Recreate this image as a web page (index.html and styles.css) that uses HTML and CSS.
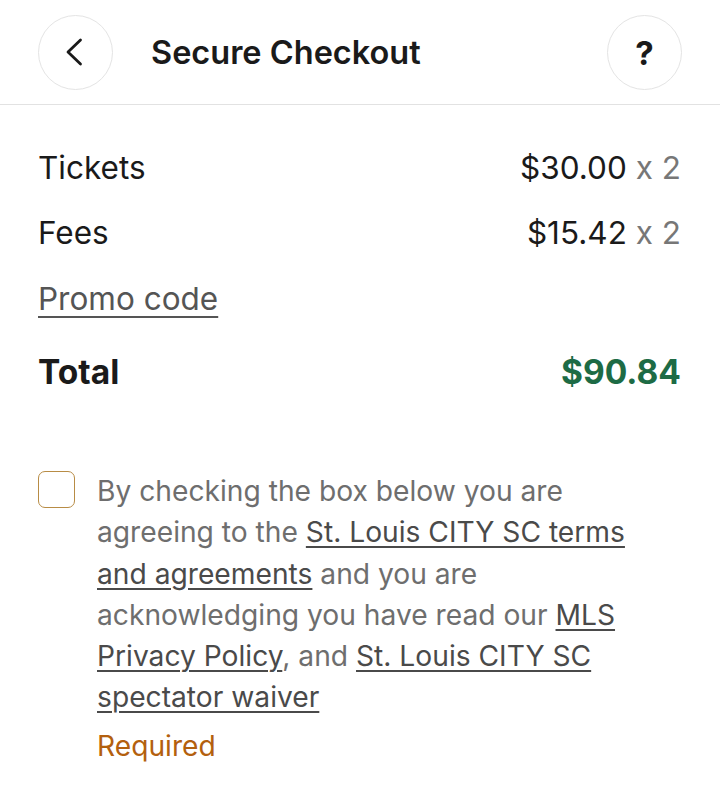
FILE: index.html
```html
<!DOCTYPE html>
<html>
<head>
<meta charset="utf-8">
<link rel="stylesheet" href="styles.css">
</head>
<body>
<header class="topbar">
  <button class="circle-btn" aria-label="Back">
    <svg class="chev" width="18" height="28" viewBox="0 0 18 28"><path d="M15.5 2 L3 14 L15.5 26" fill="none" stroke="#1a1a1a" stroke-width="2.8" stroke-linecap="round" stroke-linejoin="round"/></svg>
  </button>
  <h1 class="title">Secure Checkout</h1>
  <button class="circle-btn help" aria-label="Help">?</button>
</header>
<main class="content">
  <div class="row">
    <span class="label">Tickets</span>
    <span class="value">$30.00 <span class="qty">x 2</span></span>
  </div>
  <div class="row">
    <span class="label">Fees</span>
    <span class="value">$15.42 <span class="qty">x 2</span></span>
  </div>
  <div class="row promo-row">
    <a class="promo" href="#">Promo code</a>
  </div>
  <div class="row total-row">
    <span class="total-label">Total</span>
    <span class="total-value">$90.84</span>
  </div>
  <div class="agree">
    <span class="checkbox"></span>
    <div class="agree-text">
      <p>By checking the box below you are agreeing to the <a href="#">St. Louis CITY SC terms and agreements</a> and you are acknowledging you have read our <a href="#">MLS Privacy Policy</a>, and <a href="#">St. Louis CITY SC spectator waiver</a></p>
      <div class="required">Required</div>
    </div>
  </div>
</main>
</body>
</html>
```
FILE: styles.css
```css
* { box-sizing: border-box; }
html, body { margin: 0; padding: 0; background: #fff; }
body { font-family: Inter, Roboto, sans-serif; color: #1a1a1a; font-feature-settings: "calt" 0; }
.topbar {
  display: flex;
  align-items: center;
  padding: 15px 38px 15px 38px;
  border-bottom: 1px solid #e2e2e2;
  height: 105px;
}
.circle-btn {
  width: 75px; height: 75px;
  border-radius: 50%;
  border: 1px solid #e4e4e4;
  background: #fff;
  display: flex; align-items: center; justify-content: center;
  padding: 0;
  font-family: Inter, sans-serif;
}
.chev { margin-left: -4px; }
.help { font-size: 33px; font-weight: 700; color: #1a1a1a; padding-top: 2px; }
.title {
  flex: 1;
  margin: 0 0 0 38px;
  font-size: 32.5px;
  font-weight: 600;
}
.content { padding: 30px 39px 0 38px; }
.row {
  display: flex;
  justify-content: space-between;
  align-items: center;
  height: 65px;
  font-size: 31.5px;
  font-weight: 400;
}
.qty { color: #777; }
.promo-row { height: 66px; }
.promo { color: #555; text-decoration: underline; text-decoration-thickness: 2px; text-underline-offset: 6px; }
.total-row { height: 81px; font-weight: 700; font-size: 33.5px; }
.total-value { color: #1d6b45; }
.agree { display: flex; gap: 22px; margin-top: 59px; }
.checkbox {
  flex: none;
  width: 37px; height: 37px;
  border: 1.5px solid #b88c45;
  border-radius: 7px;
}
.agree-text { font-size: 28.2px; color: #6e6e6e; line-height: 41.3px; max-width: 562px; }
.agree-text p { margin: 0; }
.agree-text a { color: #4a4a4a; text-decoration: underline; text-decoration-thickness: 1.5px; text-underline-offset: 4px; }
.required { color: #b3600e; margin-top: 7px; }
```
